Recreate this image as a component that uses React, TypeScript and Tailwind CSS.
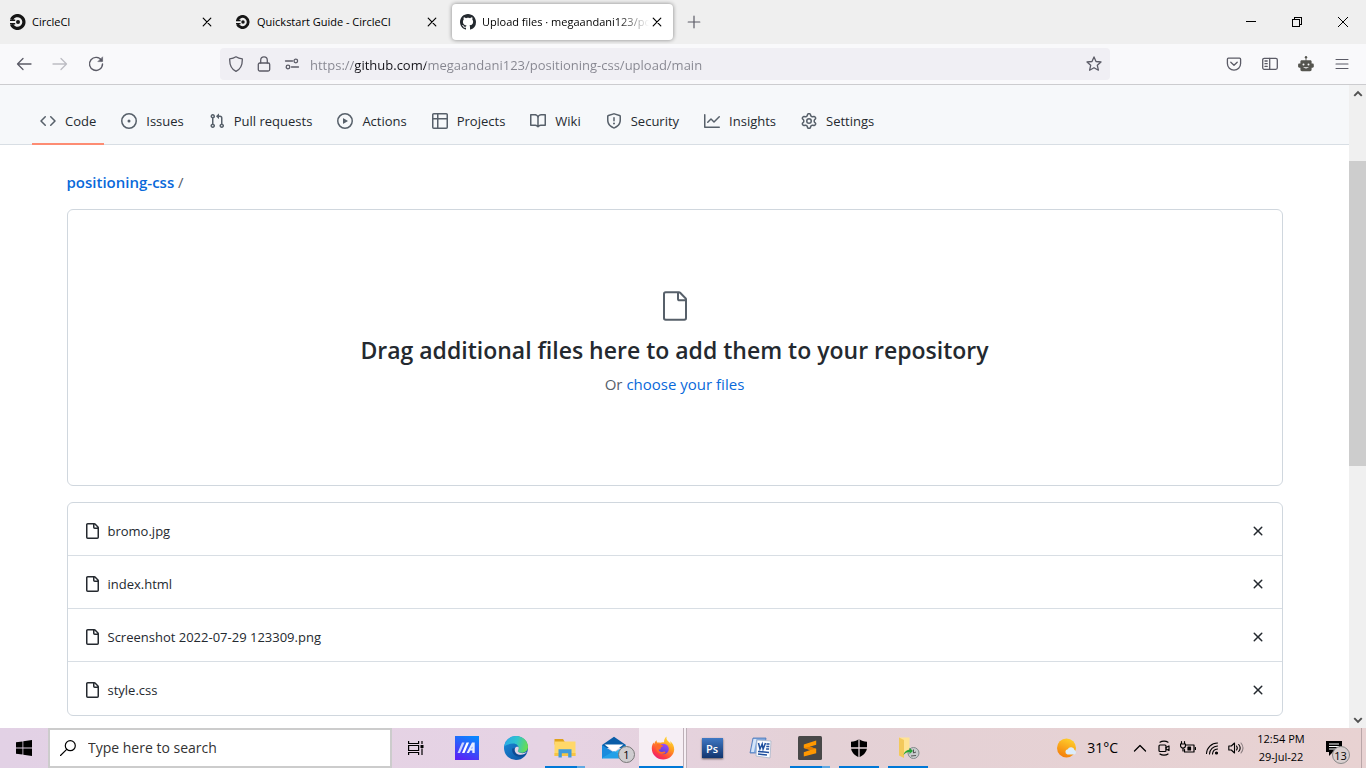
import React, { useState } from 'react';

const P = {
  code: 'M4.72 3.22a.75.75 0 011.06 1.06L2.06 8l3.72 3.72a.75.75 0 11-1.06 1.06L.47 8.53a.75.75 0 010-1.06l4.25-4.25zm6.56 0a.75.75 0 10-1.06 1.06L13.94 8l-3.72 3.72a.75.75 0 101.06 1.06l4.25-4.25a.75.75 0 000-1.06l-4.25-4.25z',
  issue: 'M8 9.5a1.5 1.5 0 100-3 1.5 1.5 0 000 3zM8 0a8 8 0 100 16A8 8 0 008 0zM1.5 8a6.5 6.5 0 1113 0 6.5 6.5 0 01-13 0z',
  pull: 'M7.177 3.073L9.573.677A.25.25 0 0110 .854v4.792a.25.25 0 01-.427.177L7.177 3.427a.25.25 0 010-.354zM3.75 2.5a.75.75 0 100 1.5.75.75 0 000-1.5zm-2.25.75a2.25 2.25 0 113 2.122v5.256a2.251 2.251 0 11-1.5 0V5.372A2.25 2.25 0 011.5 3.25zM11 2.5h-1V4h1a1 1 0 011 1v5.628a2.251 2.251 0 101.5 0V5A2.5 2.5 0 0011 2.5zm1 10.25a.75.75 0 111.5 0 .75.75 0 01-1.5 0zM3.75 12a.75.75 0 100 1.5.75.75 0 000-1.5z',
  play: 'M1.5 8a6.5 6.5 0 1113 0 6.5 6.5 0 01-13 0zM8 0a8 8 0 100 16A8 8 0 008 0zM6.379 5.227A.25.25 0 006 5.442v5.117a.25.25 0 00.379.214l4.264-2.559a.25.25 0 000-.428L6.379 5.227z',
  table: 'M0 1.75C0 .784.784 0 1.75 0h12.5C15.216 0 16 .784 16 1.75v3.585a.746.746 0 010 .83v8.085A1.75 1.75 0 0114.25 16H6.309a.748.748 0 01-1.118 0H1.75A1.75 1.75 0 010 14.25V6.165a.746.746 0 010-.83V1.75zM1.5 6.5v7.75c0 .138.112.25.25.25H5v-8H1.5zM6.5 6.5v8h7.75a.25.25 0 00.25-.25V6.5h-8zM14.5 5V1.75a.25.25 0 00-.25-.25H6.5V5h8zM5 5V1.5H1.75a.25.25 0 00-.25.25V5H5z',
  book: 'M0 1.75A.75.75 0 01.75 1h4.253c1.227 0 2.317.59 3 1.501A3.744 3.744 0 0111.006 1h4.245a.75.75 0 01.75.75v10.5a.75.75 0 01-.75.75h-4.507a2.25 2.25 0 00-1.591.659l-.622.621a.75.75 0 01-1.06 0l-.622-.621A2.25 2.25 0 005.258 13H.75a.75.75 0 01-.75-.75V1.75zm8.755 3a2.25 2.25 0 012.25-2.25H14.5v9h-3.757c-.71 0-1.4.201-1.992.572l.004-7.322zm-1.504 7.324l.004-5.073-.002-2.253A2.25 2.25 0 005.003 2.5H1.5v9h3.757a3.75 3.75 0 011.994.574z',
  shield: 'M7.467.133a1.75 1.75 0 011.066 0l5.25 1.68A1.75 1.75 0 0115 3.48V7c0 1.566-.32 3.182-1.303 4.682-.983 1.498-2.585 2.813-5.032 3.855a1.7 1.7 0 01-1.33 0c-2.447-1.042-4.049-2.357-5.032-3.855C1.32 10.182 1 8.566 1 7V3.48a1.75 1.75 0 011.217-1.667l5.25-1.68zm.61 1.429a.25.25 0 00-.153 0l-5.25 1.68a.25.25 0 00-.174.238V7c0 1.358.275 2.666 1.057 3.86.784 1.194 2.121 2.34 4.366 3.297a.2.2 0 00.154 0c2.245-.956 3.582-2.104 4.366-3.298C13.225 9.666 13.5 8.36 13.5 7V3.48a.25.25 0 00-.174-.237l-5.25-1.68zM9 10.5a1 1 0 11-2 0 1 1 0 012 0zm-.25-5.75a.75.75 0 10-1.5 0v3a.75.75 0 001.5 0v-3z',
  graph: 'M1.5 1.75a.75.75 0 00-1.5 0v12.5c0 .414.336.75.75.75h14.5a.75.75 0 000-1.5H1.5V1.75zm14.28 2.53a.75.75 0 00-1.06-1.06L10 7.94 7.53 5.47a.75.75 0 00-1.06 0L3.22 8.72a.75.75 0 001.06 1.06L7 7.06l2.47 2.47a.75.75 0 001.06 0l5.25-5.25z',
  gear: 'M7.429 1.525a6.593 6.593 0 011.142 0c.036.003.108.036.137.146l.289 1.105c.147.56.55.967.997 1.189.174.086.341.183.501.29.417.278.97.423 1.53.27l1.102-.303c.11-.03.175.016.195.046.219.31.41.641.573.989.014.031.022.11-.059.19l-.815.806c-.411.406-.562.957-.53 1.456a4.588 4.588 0 010 .582c-.032.499.119 1.05.53 1.456l.815.806c.08.08.073.159.059.19a6.494 6.494 0 01-.573.99c-.02.029-.086.074-.195.045l-1.103-.303c-.559-.153-1.112-.008-1.529.27-.16.107-.327.204-.5.29-.449.222-.851.628-.998 1.189l-.289 1.105c-.029.11-.101.143-.137.146a6.613 6.613 0 01-1.142 0c-.036-.003-.108-.037-.137-.146l-.289-1.105c-.147-.56-.55-.967-.997-1.189a4.502 4.502 0 01-.501-.29c-.417-.278-.97-.423-1.53-.27l-1.102.303c-.11.03-.175-.016-.195-.046a6.492 6.492 0 01-.573-.989c-.014-.031-.022-.11.059-.19l.815-.806c.411-.406.562-.957.53-1.456a4.587 4.587 0 010-.582c.032-.499-.119-1.05-.53-1.456l-.815-.806c-.08-.08-.073-.159-.059-.19a6.44 6.44 0 01.573-.99c.02-.029.086-.075.195-.045l1.103.303c.559.153 1.112.008 1.529-.27.16-.107.327-.204.5-.29.449-.222.851-.628.998-1.189l.289-1.105c.029-.11.101-.143.137-.146zM8 0c-.236 0-.47.01-.701.03-.743.065-1.29.615-1.458 1.261l-.29 1.106c-.017.066-.078.158-.211.224a5.994 5.994 0 00-.668.386c-.123.082-.233.09-.3.071L3.27 2.776c-.644-.177-1.392.02-1.82.63a7.977 7.977 0 00-.704 1.217c-.315.675-.111 1.422.363 1.891l.815.806c.05.048.098.147.088.294a6.084 6.084 0 000 .772c.01.147-.038.246-.088.294l-.815.806c-.474.469-.678 1.216-.363 1.891.2.428.436.835.704 1.218.428.609 1.176.806 1.82.63l1.103-.303c.066-.019.176-.011.299.071.213.143.436.272.668.386.133.066.194.158.212.224l.289 1.106c.169.646.715 1.196 1.458 1.26a8.094 8.094 0 001.402 0c.743-.064 1.29-.614 1.458-1.26l.29-1.106c.017-.066.078-.158.211-.224a5.98 5.98 0 00.668-.386c.123-.082.233-.09.3-.071l1.102.302c.644.177 1.392-.02 1.82-.63.268-.382.505-.789.704-1.217.315-.675.111-1.422-.364-1.891l-.814-.806c-.05-.048-.098-.147-.088-.294a6.1 6.1 0 000-.772c-.01-.147.039-.246.088-.294l.814-.806c.475-.469.679-1.216.364-1.891a7.992 7.992 0 00-.704-1.218c-.428-.609-1.176-.806-1.82-.63l-1.103.303c-.066.019-.176.011-.299-.071a5.991 5.991 0 00-.668-.386c-.133-.066-.194-.158-.212-.224L10.16 1.29C9.99.645 9.444.095 8.701.031A8.094 8.094 0 008 0zm1.5 8a1.5 1.5 0 11-3 0 1.5 1.5 0 013 0zM11 8a3 3 0 11-6 0 3 3 0 016 0z',
  file: 'M3.75 1.5a.25.25 0 00-.25.25v12.5c0 .138.112.25.25.25h9.5a.25.25 0 00.25-.25V6h-2.75A1.75 1.75 0 019 4.25V1.5H3.75zm6.75.06v2.69c0 .138.112.25.25.25h2.69l-.01-.01-2.914-2.914-.016-.016zM2 1.75C2 .784 2.784 0 3.75 0h6.586c.464 0 .909.184 1.237.513l2.914 2.914c.329.328.513.773.513 1.237v9.586A1.75 1.75 0 0113.25 16h-9.5A1.75 1.75 0 012 14.25V1.75z',
  x: 'M3.72 3.72a.75.75 0 011.06 0L8 6.94l3.22-3.22a.75.75 0 111.06 1.06L9.06 8l3.22 3.22a.75.75 0 11-1.06 1.06L8 9.06l-3.22 3.22a.75.75 0 01-1.06-1.06L6.94 8 3.72 4.78a.75.75 0 010-1.06z',
  github: 'M8 0C3.58 0 0 3.58 0 8c0 3.54 2.29 6.53 5.47 7.59.4.07.55-.17.55-.38 0-.19-.01-.82-.01-1.49-2.01.37-2.53-.49-2.69-.94-.09-.23-.48-.94-.82-1.13-.28-.15-.68-.52-.01-.53.63-.01 1.08.58 1.23.82.72 1.21 1.87.87 2.33.66.07-.52.28-.87.51-1.07-1.78-.2-3.64-.89-3.64-3.95 0-.87.31-1.59.82-2.15-.08-.2-.36-1.02.08-2.12 0 0 .67-.21 2.2.82.64-.18 1.32-.27 2-.27.68 0 1.36.09 2 .27 1.53-1.04 2.2-.82 2.2-.82.44 1.1.16 1.92.08 2.12.51.56.82 1.27.82 2.15 0 3.07-1.87 3.75-3.65 3.95.29.25.54.73.54 1.48 0 1.07-.01 1.93-.01 2.2 0 .21.15.46.55.38A8.013 8.013 0 0016 8c0-4.42-3.58-8-8-8z',
};

function Oct({ d, className = '' }: { d: string; className?: string }) {
  return (
    <svg viewBox="0 0 16 16" className={`size-4 shrink-0 ${className}`} fill="currentColor" fillRule="evenodd" aria-hidden="true">
      <path d={d} />
    </svg>
  );
}

function Line({ children, className = 'size-4', w = 1.3 }: { children: React.ReactNode; className?: string; w?: number }) {
  return (
    <svg viewBox="0 0 16 16" className={`shrink-0 ${className}`} fill="none" stroke="currentColor" strokeWidth={w} strokeLinecap="round" strokeLinejoin="round" aria-hidden="true">
      {children}
    </svg>
  );
}

function CircleCi({ className = 'size-4' }: { className?: string }) {
  return (
    <svg viewBox="0 0 16 16" className={`shrink-0 ${className}`} aria-hidden="true">
      <path d="M1.6 5.6A6.4 6.4 0 1 1 1.6 10.4" fill="none" stroke="#161616" strokeWidth="3.2" />
      <path d="M0 5.4h5.2v1.6H0zM0 9h5.2v1.6H0z" fill="#161616" />
      <circle cx="8" cy="8" r="2" fill="#161616" />
    </svg>
  );
}

const tabs = [
  { title: 'CircleCI', icon: <CircleCi />, active: false },
  { title: 'Quickstart Guide - CircleCI', icon: <span className="flex size-4 shrink-0 items-center justify-center"><CircleCi className="size-[14px]" /></span>, active: false },
  { title: 'Upload files · megaandani123/positioning-css', icon: <Oct d={P.github} className="text-[#24292f]" />, active: true },
];

function TabStrip() {
  return (
    <div className="flex h-11 shrink-0 items-center bg-[#efefef] pl-0.5 text-black">
      <div className="flex gap-1" role="tablist">
        {tabs.map((t) => (
          <div key={t.title} className={`flex h-9 w-[221px] items-center rounded px-2 ${t.active ? 'bg-white shadow-[0_0_4px_rgba(0,0,0,0.45)]' : ''}`}>
            <button role="tab" aria-selected={t.active} className="flex min-w-0 flex-1 items-center gap-1.5 text-left text-[11px] leading-4 font-medium">
              {t.icon}
              <span className={`flex-1 overflow-hidden whitespace-nowrap ${t.active ? '[mask-image:linear-gradient(to_right,black_calc(100%-32px),transparent)]' : ''}`}>{t.title}</span>
            </button>
            <button aria-label={`Close ${t.title}`} className="flex size-4 items-center justify-center">
              <Line w={1.2}><path d="M4.2 4.2l7.6 7.6M11.8 4.2l-7.6 7.6" /></Line>
            </button>
          </div>
        ))}
      </div>
      <button aria-label="New tab" className="ml-[13px] flex size-4 items-center justify-center text-[#5b5b66]">
        <Line w={1.2}><path d="M8 2.2v11.6M2.2 8h11.6" /></Line>
      </button>
      <div className="ml-auto flex h-full shrink-0">
        <button aria-label="Minimize" className="flex w-[46px] items-center justify-center">
          <svg viewBox="0 0 10 10" className="size-[10px]" stroke="#000" shapeRendering="crispEdges"><path d="M0 4.5h10" /></svg>
        </button>
        <button aria-label="Restore" className="flex w-[46px] items-center justify-center">
          <svg viewBox="0 0 10 10" className="size-[10px]" fill="none" stroke="#000" shapeRendering="crispEdges"><path d="M.5 2.5h7v7h-7zM2.5 2.5v-2h7v7h-2" /></svg>
        </button>
        <button aria-label="Close window" className="flex w-[46px] items-center justify-center">
          <svg viewBox="0 0 10 10" className="size-[10px]" stroke="#000"><path d="M0 0l10 10M10 0L0 10" /></svg>
        </button>
      </div>
    </div>
  );
}

const toolBtn = 'flex h-8 w-9 shrink-0 items-center justify-center';

function Toolbar() {
  return (
    <div className="flex h-[41px] shrink-0 items-center border-b border-[#cccccf] bg-[#f9f9fb] px-1.5 text-[#5b5b66]">
      <button aria-label="Back" className={toolBtn}><Line><path d="M15 8H1.5M7 2.5L1.5 8 7 13.5" /></Line></button>
      <button aria-label="Forward" disabled className={`${toolBtn} text-[#bdbdc3]`}><Line><path d="M1 8h13.5M9 2.5L14.5 8 9 13.5" /></Line></button>
      <button aria-label="Reload" className={toolBtn}>
        <Line w={1.4}><path d="M13.6 4.6A6.5 6.5 0 1 0 14.5 8" /><path d="M14.6 1.2v4.400h-4.400z" fill="currentColor" strokeWidth="0.6" /></Line>
      </button>
      <div className="flex-[106]" />
      <div className="flex h-8 min-w-0 flex-[874] items-center rounded bg-[#f0eff4] px-2">
        <Line><path d="M8 .8c2 1.3 4 1.8 6.3 2C14.500 8.500 13 13 8 15.300 3 13 1.500 8.500 1.700 2.800 4 2.600 6 2.100 8 .8z" /></Line>
        <Line className="ml-3 size-4"><rect x="2.300" y="7" width="11.400" height="8" rx="1.500" /><path d="M4.700 7V4.200a3.300 3.300 0 0 1 6.600 0V7" /></Line>
        <Line className="ml-3 size-4"><path d="M1.500 5h7M7.500 11h7" /><circle cx="11.800" cy="5" r="1.800" /><circle cx="4" cy="11" r="1.800" /></Line>
        <input
          aria-label="Address"
          type="text"
          defaultValue="https://github.com/megaandani123/positioning-css/upload/main"
          className="ml-2.5 min-w-0 flex-1 bg-[linear-gradient(to_right,#85858f_45px,#15141a_45px,#15141a_116px,#85858f_116px)] bg-clip-text pt-0.5 text-[13px] leading-5 text-transparent outline-none"
        />
        <button aria-label="Bookmark this page" className="flex size-4 items-center justify-center">
          <Line><path d="M8 .9l2 4.600 5 .5-3.700 3.300 1.100 4.900L8 11.700l-4.400 2.500 1.100-4.900L1 6l5-.5z" /></Line>
        </button>
      </div>
      <div className="flex-[106]" />
      <button aria-label="Save to Pocket" className={toolBtn}>
        <Line><path d="M2.400 2.200h11.200c.6 0 1 .4 1 1v4.300a6.600 6.600 0 0 1-13.200 0V3.200c0-.6.4-1 1-1z" /><path d="M4.800 6.200L8 9.300l3.200-3.100" /></Line>
      </button>
      <button aria-label="Sidebars" className={toolBtn}>
        <Line><rect x=".7" y="2.300" width="14.600" height="11" rx="1.500" /><path d="M7.700 2.300v11M3 5h2.200M3 7.700h2.200M3 10.400h2.200" /></Line>
      </button>
      <button aria-label="Automation extension" className={toolBtn}>
        <svg viewBox="0 0 16 16" className="size-4" aria-hidden="true">
          <circle cx="8" cy="1.300" r="1.200" fill="#55554f" />
          <path d="M7.600 1.500h.8v2.700h3.800c1 0 1.400.6 1.400 1.400v1.900h1c.7 0 1.200.5 1.200 1.200v1.800c0 .7-.5 1.200-1.200 1.200h-1v1.900c0 1-.6 1.600-1.600 1.600H4c-1 0-1.600-.6-1.600-1.600v-1.900h-1c-.8 0-1.300-.5-1.300-1.200V8.700c0-.7.5-1.200 1.300-1.200h1V5.600c0-.8.4-1.400 1.400-1.400h3.800z" fill="#55554f" />
          <circle cx="5.500" cy="8.500" r="1" fill="#f9f9fb" /><circle cx="10.500" cy="8.500" r="1" fill="#f9f9fb" />
          <path d="M5 11.300c1.800 1.500 4.200 1.500 6 0z" fill="#f9f9fb" />
        </svg>
      </button>
      <button aria-label="Open application menu" className={toolBtn}><Line w={1.1}><path d="M2 3.500h12M2 8h12M2 12.500h12" /></Line></button>
    </div>
  );
}

const navItems = [
  { label: 'Code', d: P.code, active: true },
  { label: 'Issues', d: P.issue },
  { label: 'Pull requests', d: P.pull },
  { label: 'Actions', d: P.play },
  { label: 'Projects', d: P.table },
  { label: 'Wiki', d: P.book },
  { label: 'Security', d: P.shield },
  { label: 'Insights', d: P.graph },
  { label: 'Settings', d: P.gear },
];

function RepoNav() {
  return (
    <nav aria-label="Repository" className="flex h-[60px] items-end gap-[9px] border-b border-[#d8dee4] bg-[#f6f8fa] px-8">
      {navItems.map((n) => (
        <a key={n.label} href="#" className={`-mb-px flex h-[46px] items-center gap-[9px] border-b-2 px-2 text-[13px] leading-5 ${n.active ? 'border-[#fd8c73] font-medium' : 'border-transparent'}`}>
          <Oct d={n.d} className="text-[#57606a]" />
          {n.label}
        </a>
      ))}
    </nav>
  );
}

function UploadPage() {
  const [files, setFiles] = useState(['bromo.jpg', 'index.html', 'Screenshot 2022-07-29 123309.png', 'style.css']);
  return (
    <main className="mx-auto w-full max-w-[1280px] px-8">
      <div className="pt-6 pb-3.5 text-[15px] leading-[26px] text-[#57606a]">
        <a href="#" className="font-semibold text-[#0969da]">positioning-css</a> /
      </div>
      <section className="flex h-[277px] flex-col items-center rounded-md border border-[#d0d7de] pt-20">
        <svg viewBox="0 0 24 24" className="size-8 text-[#57606a]" fill="currentColor" fillRule="evenodd" aria-hidden="true">
          <path d="M5 2.5a.5.5 0 00-.5.5v18a.5.5 0 00.5.5h14a.5.5 0 00.5-.5V8.500h-4a2 2 0 01-2-2v-4H5zm10 0v4a.5.5 0 00.5.5h4a.5.5 0 00-.146-.336l-4.018-4.018A.5.5 0 0015 2.500zM3 3a2 2 0 012-2h9.982a2 2 0 011.414.586l4.018 4.018A2 2 0 0121 7.018V21a2 2 0 01-2 2H5a2 2 0 01-2-2V3z" />
        </svg>
        <h2 className="mt-2.5 text-[23px] leading-9 font-semibold">Drag additional files here to add them to your repository</h2>
        <p className="mt-1 text-[15px] leading-6 text-[#57606a]">
          Or{' '}
          <label className="cursor-pointer text-[#0969da]">
            choose your files
            <input type="file" multiple className="sr-only" />
          </label>
        </p>
      </section>
      <ul className="mt-4 rounded-md border border-[#d0d7de]">
        {files.map((f) => (
          <li key={f} className="flex h-[53px] items-center gap-2 border-b border-[#d8dee4] px-4 pt-1 text-[13px] leading-5 last:border-transparent">
            <Oct d={P.file} />
            <span className="flex-1">{f}</span>
            <button aria-label={`Remove ${f}`} onClick={() => setFiles(files.filter((n) => n !== f))}>
              <Oct d={P.x} />
            </button>
          </li>
        ))}
      </ul>
    </main>
  );
}

function Scrollbar() {
  return (
    <div className="flex w-[17px] shrink-0 flex-col items-center bg-[#f0f0f0] text-[#505050]" aria-hidden="true">
      <div className="flex h-[17px] items-center"><Line w={2.600} className="size-3"><path d="M3 10.500l5-5 5 5" strokeLinecap="butt" strokeLinejoin="miter" /></Line></div>
      <div className="flex w-full flex-1 flex-col">
        <div className="flex-[59]" />
        <div className="flex-[305] bg-[#cdcdcd]" />
        <div className="flex-[245]" />
      </div>
      <div className="flex h-[17px] items-center"><Line w={2.600} className="size-3"><path d="M3 5.500l5 5 5-5" strokeLinecap="butt" strokeLinejoin="miter" /></Line></div>
    </div>
  );
}

const apps: { name: string; state?: 'multi' | 'open' | 'active'; icon: React.ReactNode }[] = [
  {
    name: 'MyASUS',
    icon: (
      <svg viewBox="0 0 24 24" className="size-6">
        <defs><linearGradient id="asus" x1="0.700" y1="0" x2="0.300" y2="1"><stop offset="0" stopColor="#0a86ff" /><stop offset="1" stopColor="#5b22f5" /></linearGradient></defs>
        <path d="M0 0h24v24H0z" fill="url(#asus)" />
        <path d="M2.500 17L7 6.500h2.500L5 17z" fill="#c9d4ff" />
        <path d="M7 17l4.500-10.500H14L9.500 17z" fill="#fff" />
        <path d="M11.500 17L17 6.500h2.700V17h-2.400v-2.600h-2l-1.300 2.600zM16.300 12.400h1V10.500z" fill="#e6ecff" fillRule="evenodd" />
      </svg>
    ),
  },
  {
    name: 'Microsoft Edge',
    icon: (
      <svg viewBox="0 0 24 24" className="size-6">
        <defs>
          <linearGradient id="edgeTop" x1="0" y1="0.300" x2="1" y2="0.500"><stop offset="0" stopColor="#2aa9e8" /><stop offset="0.500" stopColor="#2fc4cf" /><stop offset="1" stopColor="#6ade4e" /></linearGradient>
          <linearGradient id="edgeLow" x1="0" y1="0" x2="1" y2="1"><stop offset="0" stopColor="#1b8fdc" /><stop offset="1" stopColor="#0c4d9d" /></linearGradient>
        </defs>
        <circle cx="12" cy="12" r="12" fill="url(#edgeLow)" />
        <path d="M.2 10.500C1.200 4.300 6.200 0 12.200 0 19 0 24 5.200 24 10.800c0 3.700-2.900 6-6.300 6-2.500 0-3.900-.8-3.900-1.700 0-.7.900-1.200.9-2.900 0-2.300-2.200-4.600-5.500-4.600-4 0-7.300 1.300-9 2.900z" fill="url(#edgeTop)" />
        <path d="M8.300 12.500c-.8 4.400 2.400 8.300 7.200 8.300 2.700 0 5-1 6.900-2.800-2 .9-3.800 1.200-5.700 1-4-.3-6.300-3-5.600-6.800z" fill="#0d4b93" />
        <path d="M23 15.800c-2.500 1.800-6.600 1.700-8.600.2-.5-.4-.7-.7-.5-1.300.9-1.300 1-2.700.6-3.800-1.200-.5-2.700-.2-3.500 1.300-1 2.700.6 6 4.700 6.600 3 .3 5.900-.9 7.300-3z" fill="#e4d3e5" />
      </svg>
    ),
  },
  {
    name: 'File Explorer',
    state: 'multi',
    icon: (
      <svg viewBox="0 0 24 24" className="size-6">
        <path d="M1.500 3h8.500l1.500 2.500v3h-10z" fill="#e0a21a" />
        <path d="M1.500 5.500h21V20h-21z" fill="#ffd869" />
        <path d="M1.500 17h21v3h-21z" fill="#f6c444" />
        <path d="M5.500 21.500V13.300h13v8.200h-3.300v-4.200H8.800v4.200z" fill="#3f9bdc" />
      </svg>
    ),
  },
  {
    name: 'Mail',
    icon: (
      <span className="relative">
        <svg viewBox="0 0 24 24" className="size-6">
          <path d="M0 9L12 .8 24 9v3H0z" fill="#0a5da8" />
          <path d="M2.500 8.500h19L12 16z" fill="#fff" />
          <path d="M0 9l12 7.500L0 22.500z" fill="#1a8bdd" /><path d="M24 9l-12 7.500 12 6z" fill="#35b5ee" />
          <path d="M0 22.500V22l12-7 12 7v.5z" fill="#23a0e8" />
        </svg>
        <span className="absolute top-2.5 left-4 flex size-[17px] items-center justify-center rounded-full border border-[#777] bg-[#cfcdd0] text-[11px] leading-none text-black">1</span>
      </span>
    ),
  },
  {
    name: 'Firefox',
    state: 'active',
    icon: (
      <svg viewBox="0 0 24 24" className="ml-1 size-6">
        <defs>
          <linearGradient id="fox" x1="0.800" y1="0" x2="0.200" y2="1"><stop offset="0" stopColor="#ffe83a" /><stop offset="0.400" stopColor="#ff9a1f" /><stop offset="0.750" stopColor="#ff4040" /><stop offset="1" stopColor="#e8157d" /></linearGradient>
          <linearGradient id="globe" x1="0.700" y1="0" x2="0.300" y2="1"><stop offset="0" stopColor="#9b4dff" /><stop offset="1" stopColor="#5a3fd0" /></linearGradient>
        </defs>
        <path d="M15.800.5c-1 2 .2 3.700 1.600 5 .8.700 1.600 1.500 2 2.400.2-1 0-2-.4-2.800 2.700 2 4.400 5.200 4.200 8.700C22.800 19.500 18 23.500 12.200 23.500 6 23.500.8 18.800.8 12.500c0-2.300.6-4.200 1.800-5.900l.5 1.600C3.600 6.400 4.500 5 5.700 4.300c-.2 1 0 1.600.4 2.200 1-.2 2-.1 3 .3 1.300-.5 2.800-.8 4-.3-.1-2.700.6-4.800 2.700-6z" fill="url(#fox)" />
        <circle cx="12.500" cy="13" r="5.300" fill="url(#globe)" />
        <path d="M5.800 8.300c1.300-.5 2.900-.2 3.900.7 1.200 0 2.200.3 2.600.8-.1.900-1.800 1.200-2.300 1.700-.4.500 0 1.500-.8 2-.9.300-1.600-.2-1.600-.2.100 2 2 3 3.600 2.600 1.500-.4 2.200-.8 3.100 0 .4.600-.2 1.300-1 1.500-3.600 1.500-7.500-.7-8-4.100-.3-1.800-.1-3.700.5-5z" fill="#ff6a2a" />
      </svg>
    ),
  },
  {
    name: 'Photoshop',
    icon: <span className="flex h-5 w-[21px] items-center justify-center bg-linear-to-b from-[#3f78c4] to-[#12366f] text-[11px] leading-none font-semibold text-white shadow-[0_1px_2px_rgba(0,0,0,0.6)]">Ps</span>,
  },
  {
    name: 'Word',
    icon: (
      <svg viewBox="0 0 24 24" className="size-6">
        <path d="M4 2h13l-2 15H1z" fill="#7fa8e0" stroke="#4a76b8" strokeWidth="0.800" />
        <path d="M4.500 3h3L5 16H2z" fill="#d5e4f8" />
        <path d="M8 4l14 1-1 17-14-2z" fill="#fbfcff" stroke="#a7b4c8" strokeWidth="0.800" />
        <path d="M9.500 7l1.500 6 2.200-5 .9 5 2.400-6M17.500 8h3M17.300 10.500h3M17.100 13h3M9 15.500l11 1M9 18l9 1" fill="none" stroke="#1f4f9e" strokeWidth="1.500" />
      </svg>
    ),
  },
  {
    name: 'Sublime Text',
    state: 'multi',
    icon: (
      <svg viewBox="0 0 24 24" className="size-6">
        <rect width="24" height="24" rx="1.500" fill="#484848" />
        <path d="M18.200 4.500v4.200l-6.500 2 6.500 2v4.500L5.800 20.500v-4.300l6.500-2.100-6.500-2V8.400z" fill="#ff9800" />
        <path d="M5.800 12.100l6.500 2 5.900-1.400-6.500-2z" fill="#e27d00" />
      </svg>
    ),
  },
  {
    name: 'Windows Security',
    state: 'open',
    icon: (
      <svg viewBox="0 0 24 24" className="size-6">
        <path d="M12 3c2.500 1.800 5 2.600 8 2.700v5.500c0 4.500-3.200 8-8 10.100-4.800-2.100-8-5.600-8-10.100V5.700C7 5.600 9.500 4.800 12 3z" fill="#000" />
        <path d="M12 2v20M3 12h18" stroke="#e4d3d8" strokeWidth="1.300" />
      </svg>
    ),
  },
  {
    name: 'Backup folder',
    state: 'open',
    icon: (
      <svg viewBox="0 0 24 24" className="size-6">
        <path d="M3 1.500h10.500V16L3 20z" fill="#ffe394" /><path d="M3 1.500l5 2.500v18L3 19.500z" fill="#f3c95c" />
        <circle cx="17.500" cy="17" r="5.500" fill="#c9ccce" stroke="#83898c" />
        <path d="M17.500 13.500V17l2.500-1M20 19.500l-5 .5" fill="none" stroke="#555" />
        <path d="M7.500 19c.5-3 2.500-5 6-5.300v-2l3.500 3.400-3.500 3v-2c-2.600.2-4.500 1-6 2.900z" fill="#25a33a" />
      </svg>
    ),
  },
];

function TaskApp({ name, state, icon }: (typeof apps)[number]) {
  return (
    <button aria-label={name} className={`relative flex w-12 shrink-0 items-center justify-center ${state === 'active' ? 'border-r-4 border-double border-[#bdb0b8] bg-[#f6eef4]' : ''}`}>
      {icon}
      {state && (
        <span className={`absolute bottom-0 flex h-0.5 ${state === 'active' ? 'inset-x-0' : 'inset-x-1'}`}>
          <span className="flex-1 bg-[#0078d7]" />
          {state === 'multi' && <span className="w-2 bg-[#5fa8e2]" />}
        </span>
      )}
    </button>
  );
}

function Taskbar() {
  return (
    <footer className="flex h-10 shrink-0 bg-[linear-gradient(to_right,#e2d1e5,#e6d3e4_40%,#e4d1d6_60%,#e8d2d2)] text-black">
      <button aria-label="Start" className="flex w-12 shrink-0 items-center justify-center">
        <svg viewBox="0 0 16 16" className="size-4"><path d="M0 2.300l6.500-.9v6.200H0zM7.300 1.300L16 0v7.600H7.300zM0 8.400h6.500v6.200L0 13.700zM7.300 8.400H16V16l-8.700-1.300z" /></svg>
      </button>
      <label className="flex w-[344px] shrink items-center gap-3 border-2 border-[#cccccc] bg-white pl-2.5">
        <Line w={1.200}><circle cx="10.300" cy="5.700" r="5" /><path d="M6.700 9.300L.5 15.500" /></Line>
        <input aria-label="Search" type="text" placeholder="Type here to search" className="min-w-0 flex-1 bg-transparent text-[14px] leading-5 outline-none placeholder:text-[#333333]" />
      </label>
      <button aria-label="Task view" className="mr-[3px] flex w-12 shrink-0 items-center justify-center">
        <svg viewBox="0 0 16 16" className="size-4" fill="none" stroke="#000" strokeWidth="1.200"><path d="M.6 1v2.500h10V1M.6 15v-2.500h10V15M.6 5.500h10v5H.6zM14 1v3M14 8.500V15" /><path d="M12.500 5h3v3h-3z" fill="#000" stroke="none" /></svg>
      </button>
      <div className="flex gap-px">{apps.map((a) => <TaskApp key={a.name} {...a} />)}</div>
      <div className="ml-auto flex shrink-0 items-center">
        <button className="flex items-center gap-2.5 pr-2.5 text-[14px] leading-5">
          <svg viewBox="0 0 20 20" className="size-5" aria-hidden="true">
            <defs><linearGradient id="sun" x1="0.700" y1="0" x2="0.300" y2="1"><stop offset="0" stopColor="#ffd02c" /><stop offset="1" stopColor="#f47c0a" /></linearGradient></defs>
            <circle cx="9.500" cy="10" r="9.500" fill="url(#sun)" />
            <path d="M10.500 16.500a2.700 2.700 0 0 1 .2-5.300 3.700 3.700 0 0 1 6.800.9 2.300 2.300 0 0 1-.2 4.400z" fill="#dcedfb" />
          </svg>
          31°C
        </button>
        <button aria-label="Show hidden icons" className="flex w-6 justify-center"><Line><path d="M2.500 11L8 5.500l5.500 5.500" /></Line></button>
        <button aria-label="Meet now" className="flex w-6 justify-center"><Line w={1.200}><rect x="3" y="5" width="7" height="6.500" rx="1" /><path d="M10 7.500l3-1.500v4.500l-3-1.500M4 2.200c2-1.500 6-1.500 8 0M4 14c2 1.500 6 1.500 8 0" /></Line></button>
        <button aria-label="Battery" className="flex w-6 justify-center"><Line w={1.200}><path d="M6.500 5H14v7H4.500V9.500M15.500 7.500v2" /><path d="M8 7h2.500v3H8z" fill="currentColor" /><path d="M1.500 1.500V4M4.500 1.500V4M.5 4h5v1.500a2.500 2.500 0 0 1-5 0zM3 8v3" /></Line></button>
        <button aria-label="Wireless network" className="flex w-6 justify-center"><Line w={1.100}><path d="M2.500 13.500A11 11 0 0 1 13.500 3M5.500 14A8.500 8.500 0 0 1 13.500 6M8.500 14a5.500 5.500 0 0 1 5-5" /><circle cx="12.500" cy="13" r="1" fill="currentColor" /></Line></button>
        <button aria-label="Volume" className="flex w-6 justify-center"><Line w={1.100}><path d="M.8 6v4h2.500l3.200 3V3L3.300 6zM8.500 6c.8 1 .8 3 0 4M10.700 4.500c1.700 2 1.700 5 0 7" /><path d="M13 3c2.400 3 2.400 7 0 10" stroke="#8d8183" /></Line></button>
        <button className="w-[66px] text-center text-[11px] leading-[18px] whitespace-nowrap">12:54 PM<br />29-Jul-22</button>
        <button aria-label="Notifications" className="mr-1 flex h-10 w-12 items-center justify-center border-r border-[#b9a6a8] pr-3">
          <span className="relative ml-1">
            <svg viewBox="0 0 16 16" className="size-4"><path d="M0 1h16v11H7l-4 4v-4H0z" /><path d="M3 4h10M3 6.500h10M3 9h7" stroke="#fff" /></svg>
            <span className="absolute top-1.5 left-1.5 flex size-[18px] items-center justify-center rounded-full border border-[#888] bg-[#d9cfcf] text-[11px] leading-none">13</span>
          </span>
        </button>
      </div>
    </footer>
  );
}

export default function App() {
  return (
    <div className="flex h-screen flex-col overflow-hidden bg-white font-['Open_Sans','Noto_Sans',sans-serif] text-[#24292f]">
      <TabStrip />
      <Toolbar />
      <div className="flex min-h-0 flex-1">
        <div className="min-w-0 flex-1 overflow-hidden">
          <RepoNav />
          <UploadPage />
        </div>
        <Scrollbar />
      </div>
      <Taskbar />
    </div>
  );
}
